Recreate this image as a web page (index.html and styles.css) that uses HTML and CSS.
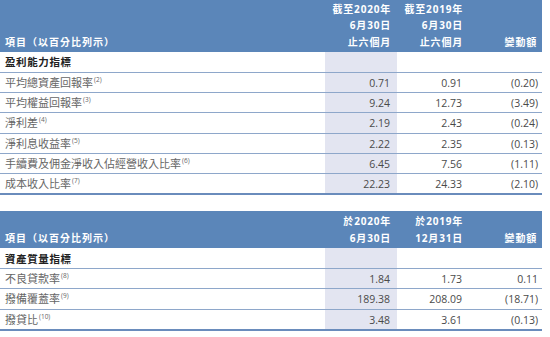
FILE: index.html
```
<html>
<head>
<title>財務指標</title>
<link rel="stylesheet" href="styles.css">
</head>
<body>
<table class="ratios">
<colgroup><col class="c-label"><col class="c-cur"><col class="c-prev"><col class="c-chg"></colgroup>
<thead>
<tr class="head3">
<th class="lbl">項目（以百分比列示）</th>
<th>截至2020年<br>6月30日<br>止六個月</th>
<th>截至2019年<br>6月30日<br>止六個月</th>
<th>變動額</th>
</tr>
</thead>
<tbody>
<tr class="section"><td class="lbl">盈利能力指標</td><td class="cur"></td><td></td><td></td></tr>
<tr><td class="lbl">平均總資產回報率<sup>(2)</sup></td><td class="cur">0.71</td><td>0.91</td><td>(0.20)</td></tr>
<tr><td class="lbl">平均權益回報率<sup>(3)</sup></td><td class="cur">9.24</td><td>12.73</td><td>(3.49)</td></tr>
<tr><td class="lbl">淨利差<sup>(4)</sup></td><td class="cur">2.19</td><td>2.43</td><td>(0.24)</td></tr>
<tr><td class="lbl">淨利息收益率<sup>(5)</sup></td><td class="cur">2.22</td><td>2.35</td><td>(0.13)</td></tr>
<tr><td class="lbl">手續費及佣金淨收入佔經營收入比率<sup>(6)</sup></td><td class="cur">6.45</td><td>7.56</td><td>(1.11)</td></tr>
<tr class="last"><td class="lbl">成本收入比率<sup>(7)</sup></td><td class="cur">22.23</td><td>24.33</td><td>(2.10)</td></tr>
</tbody>
</table>

<table class="ratios second">
<colgroup><col class="c-label"><col class="c-cur"><col class="c-prev"><col class="c-chg"></colgroup>
<thead>
<tr class="head2">
<th class="lbl">項目（以百分比列示）</th>
<th>於2020年<br>6月30日</th>
<th>於2019年<br>12月31日</th>
<th>變動額</th>
</tr>
</thead>
<tbody>
<tr class="section"><td class="lbl">資產質量指標</td><td class="cur"></td><td></td><td></td></tr>
<tr><td class="lbl">不良貸款率<sup>(8)</sup></td><td class="cur">1.84</td><td>1.73</td><td>0.11</td></tr>
<tr><td class="lbl">撥備覆蓋率<sup>(9)</sup></td><td class="cur">189.38</td><td>208.09</td><td>(18.71)</td></tr>
<tr class="last"><td class="lbl">撥貸比<sup>(10)</sup></td><td class="cur">3.48</td><td>3.61</td><td>(0.13)</td></tr>
</tbody>
</table>
</body>
</html>
```
FILE: styles.css
```
body { margin:0; background:#fff; font-family:"Open Sans", "Noto Sans CJK TC", sans-serif; font-size:10.5px; color:#5e5e5e; }

.ratios { width:542px; border-collapse:collapse; table-layout:fixed; font-family:"Open Sans", "Noto Sans CJK TC", sans-serif; font-size:10.5px; color:#4a4a4a; }
.ratios.second { margin-top:16px; }
.c-label { width:325px; }
.c-cur { width:72px; }
.c-prev { width:72px; }
.c-chg { width:73px; }

th { background:#5b86b9; color:#fff; font-weight:bold; font-size:10px; letter-spacing:0.8px; text-align:right; vertical-align:bottom; line-height:16.5px; padding:0 6px 2px 0; white-space:nowrap; overflow:visible; }
th.lbl { text-align:left; padding-left:5px; letter-spacing:1px; }
.head3 th { height:52px; box-sizing:border-box; }
.head2 th { height:37px; box-sizing:border-box; }
.head3 th:last-child, .head2 th:last-child { padding-right:5px; }

td { height:20px; box-sizing:border-box; padding:1px 7px 0 0; text-align:right; border-bottom:1px solid #8ea7ca; line-height:14px; white-space:nowrap; }
td:last-child { padding-right:4px; }
td.lbl { text-align:left; padding-left:5px; color:#666; font-size:11px; letter-spacing:0; }
td.cur { background:#e3e5f1; }
.section td { height:20px; }
.section td.lbl { color:#222; font-weight:bold; font-size:10.5px; letter-spacing:0.6px; }
tbody tr:not(.section) td { height:20.4px; }
.last td { border-bottom:2px solid #6a8cbc; }

sup { font-size:6.5px; vertical-align:top; line-height:8px; margin-left:1px; letter-spacing:0; }
```
